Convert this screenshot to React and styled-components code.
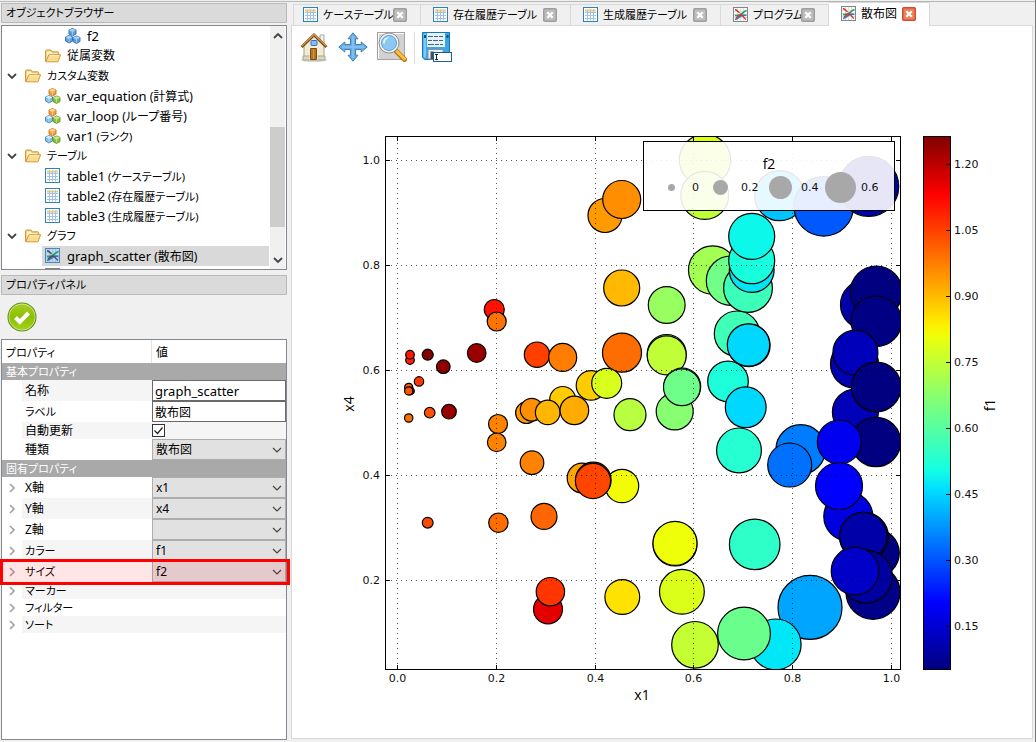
import React, { useState } from "react";
import styled, { createGlobalStyle, css } from "styled-components";

const GlobalStyle = createGlobalStyle`
  * { box-sizing: border-box; }
  body {
    margin: 0;
    background: #f0f0f0;
    color: #000;
    font-family: "Noto Sans", "Noto Sans CJK JP", sans-serif;
    font-size: 12px;
    font-feature-settings: "palt";
  }
  button, input, select { font: inherit; font-feature-settings: inherit; color: inherit; }
`;

/* ---------- frame ---------- */

const Window = styled.div`
  min-height: 100vh;
  padding-top: 1px;
  display: flex;
  border-right: 1px solid #777;
`;

const Frame = styled.div`
  flex: 1;
  min-width: 0;
  display: grid;
  grid-template-columns: 288px minmax(0, 1fr);
  border-top: 1px solid #b4b8b4;
`;

const Sidebar = styled.aside`
  display: flex;
  flex-direction: column;
  padding: 1px 1px 2px;
`;

const PanelTitle = styled.h2`
  margin: 0;
  height: 20px;
  padding: 0 4px;
  border: 1px solid #b8b8b8;
  background: #dadada;
  font-size: 11px;
  font-weight: 400;
  line-height: 18px;
`;

/* ---------- object tree ---------- */

const TreeBox = styled.div`
  display: flex;
  height: 245px;
  margin: 2px 0 5px;
  border: 1px solid #828790;
  background: #fff;
  overflow: hidden;
`;

const TreeList = styled.ul`
  flex: 1;
  min-width: 0;
  margin: 0;
  padding: 0 1px 0 0;
  list-style: none;
`;

const TreeRow = styled.li`
  display: flex;
  align-items: center;
  height: 20px;
  padding-left: ${(p) => p.$level * 20}px;
  white-space: nowrap;
`;

const TreeToggle = styled.span`
  display: flex;
  justify-content: center;
  width: 20px;
`;

const TreeItem = styled.span`
  flex: 1;
  display: flex;
  align-items: center;
  gap: 6px;
  height: 20px;
  padding-left: 3px;
  background: ${(p) => (p.$selected ? "#d9d9d9" : "transparent")};
`;

const TreeLabel = styled.span`
  line-height: 20px;
  font-size: ${(p) => (p.$small ? 11 : 12)}px;
`;

const LatinName = styled.span`
  font-size: 13px;
`;

const ScrollBar = styled.div`
  display: flex;
  flex-direction: column;
  align-items: center;
  justify-content: space-between;
  width: 15px;
  margin-right: 1px;
  padding: 5px 0 4px;
  background: #f0f0f0;
`;

const ScrollThumb = styled.div`
  width: 15px;
  height: 100px;
  margin-top: 58px;
  background: #cdcdcd;
`;

/* ---------- property panel ---------- */

const ApplyBar = styled.div`
  height: 44px;
  padding: 7px 6px;
`;

const IconButton = styled.button`
  display: block;
  width: 30px;
  height: 30px;
  padding: 0;
  border: 0;
  background: none;
`;

const PropertyBox = styled.div`
  flex: 1;
  border: 1px solid #828790;
  background: #fff;
`;

const PropertyTable = styled.table`
  width: 100%;
  table-layout: fixed;
  border-spacing: 0;
  td, th { padding: 0; font-weight: 400; text-align: left; }
`;

const HeadCell = styled.th`
  height: 23px;
  font-size: ${(p) => (p.$divided ? 11 : 12)}px;
  && { padding-left: 4px; }
  border-right: ${(p) => (p.$divided ? "1px solid #e2e2e2" : "0")};
`;

const SectionCell = styled.th`
  height: 17px;
  font-size: 11px;
  line-height: 17px;
  background: #a9a9a9;
  color: #fff;
  && { padding-left: 4px; }
`;

const PropertyRow = styled.tr`
  position: relative;
  height: ${(p) => (p.$tall ? 21 : 17)}px;
  line-height: 16px;
`;

const shade = css`
  background: ${(p) => (p.$shaded ? "#f5f5f5" : "#fff")};
`;

const ExpandCell = styled.td`
  svg { display: block; margin: 0 auto; }
`;

const LabelCell = styled.th`
  ${shade}
  font-size: ${(p) => (p.$small ? 11 : 12)}px;
  && { padding-left: 3px; }
`;

const ValueCell = styled.td`
  ${shade}
`;

const TextInput = styled.input`
  display: block;
  width: 100%;
  height: 21px;
  padding: 0 2px;
  border: 1px solid #6a6a6a;
  background: #fff;
  font-size: ${(p) => (p.$latin ? 13 : 12)}px;
`;

const CheckWrap = styled.span`
  display: grid;
  width: 13px;
  height: 13px;
  > * { grid-area: 1 / 1; }
  svg { pointer-events: none; }
`;

const CheckBox = styled.input`
  appearance: none;
  width: 13px;
  height: 13px;
  margin: 0;
  border: 1px solid #333;
  background: #fff;
  &:not(:checked) + svg { display: none; }
`;

const SelectWrap = styled.span`
  display: grid;
  align-items: center;
  > * { grid-area: 1 / 1; }
  svg { justify-self: end; margin-right: 4px; pointer-events: none; }
`;

const Select = styled.select`
  appearance: none;
  width: 100%;
  height: 21px;
  padding: 0 20px 0 3px;
  border: 1px solid #adadad;
  border-radius: 0;
  background: #e1e1e1;
`;

const Highlight = styled.span`
  position: absolute;
  z-index: 2;
  inset: -2px -4px -3px -2px;
  border: 3px solid #f00;
  background: rgba(255, 0, 0, 0.1);
  pointer-events: none;
`;

/* ---------- document area ---------- */

const Main = styled.main`
  display: flex;
  flex-direction: column;
  min-width: 0;
  padding: 0 2px 3px 3px;
`;

const TabStrip = styled.div`
  display: flex;
  align-items: flex-end;
  height: 23px;
  padding-left: 2px;
`;

const Tab = styled.div`
  position: relative;
  display: flex;
  align-items: center;
  gap: 4px;
  width: ${(p) => p.$width}px;
  height: ${(p) => (p.$active ? 24 : 21)}px;
  margin-bottom: ${(p) => (p.$active ? -1 : 0)}px;
  padding: 0 13px ${(p) => (p.$active ? 1 : 0)}px 12px;
  border: solid #d9d9d9;
  border-width: 1px 1px 0 0;
  background: ${(p) => (p.$active ? "#fff" : "#f0f0f0")};
  &:first-child { border-left-width: 1px; padding-left: 9px; }
`;

const TabButton = styled.button`
  flex: 1;
  display: flex;
  align-items: center;
  gap: 4px;
  min-width: 0;
  padding: 0;
  border: 0;
  background: none;
  font-size: ${(p) => (p.$large ? 12 : 11)}px;
  line-height: 18px;
  white-space: nowrap;
  svg { flex: none; }
`;

const CloseButton = styled.button`
  flex: none;
  width: 14px;
  height: 14px;
  padding: 0;
  border: 0;
  background: none;
  svg { display: block; }
`;

const Page = styled.section`
  flex: 1;
  border: 1px solid #d9d9d9;
  background: #fff;
`;

const Toolbar = styled.div`
  display: flex;
  gap: 7px;
  height: 44px;
  padding: 6px 7px;
`;

const ToolGroup = styled.div`
  display: flex;
  gap: 9px;
`;

const Separator = styled.div`
  width: 1px;
  background: #dcdcdc;
`;

const Chart = styled.svg`
  display: block;
  width: 100%;
  height: auto;
`;

const TickText = styled.text`
  font: 11px "DejaVu Sans", sans-serif;
  fill: #111;
`;

const AxisText = styled.text`
  font: 14px "Open Sans", sans-serif;
  text-anchor: middle;
  fill: #000;
`;

/* ---------- icons ---------- */

function Cube({ x, y, light, mid, dark }) {
  return (
    <g transform={`translate(${x} ${y})`} strokeLinejoin="round">
      <path d="M4 .5 7.5 2v4L4 8 .5 6V2z" fill={mid} stroke={dark} strokeWidth=".9" />
      <path d="M4 .8 7.2 2.1 4 3.6.8 2.1z" fill={light} />
      <path d="M4 3.6V7.6M.9 2.2 4 3.7l3.1-1.5" fill="none" stroke="#fff" strokeOpacity=".6" strokeWidth=".6" />
    </g>
  );
}

const BLUE = { light: "#a6d3f7", mid: "#5a9fe0", dark: "#2a6cb8" };
const PALE = { light: "#d4ecfb", mid: "#86bfe8", dark: "#4187bf" };
const GREEN = { light: "#cbe88c", mid: "#8cc23c", dark: "#5b9418" };
const ORANGE = { light: "#ffd79a", mid: "#f5a03c", dark: "#cf7312" };

function CubesIcon({ mixed }) {
  return (
    <svg width="16" height="16" viewBox="0 0 16 16" aria-hidden="true">
      <Cube x={3.5} y={0} {...(mixed ? ORANGE : BLUE)} />
      <Cube x={0} y={7} {...(mixed ? PALE : BLUE)} />
      <Cube x={7.5} y={7.5} {...(mixed ? GREEN : BLUE)} />
    </svg>
  );
}

function FolderIcon() {
  return (
    <svg width="16" height="16" viewBox="0 0 16 16" aria-hidden="true">
      <path d="M.5 13.500V2.800L1.500 2h4.500l1.300 1.800H13l.7.8v2" fill="#f3cf7a" stroke="#cc9a3c" />
      <path d="M2 3.500h3.700l1.200 1.800h5.400v2H4L1.700 11z" fill="#fdf3d0" />
      <path d="M.8 13.800 3.800 6.700h11.800L13 13.800z" fill="#fbdc8c" stroke="#cc9a3c" strokeLinejoin="round" />
      <path d="M4.700 7.700h9.400" stroke="#fff3c8" />
    </svg>
  );
}

function TableIcon() {
  return (
    <svg width="16" height="16" viewBox="0 0 16 16" aria-hidden="true">
      <rect x=".5" y=".5" width="14" height="14" fill="#fff" stroke="#2a84b4" />
      <path d="M2 3.500h11" stroke="#f7cf6a" strokeWidth="2" />
      <path d="M2 5.500h11M2 8.500h11M2 11.500h11" stroke="#a4c0e4" />
      <path d="M4.500 2.500v11M7.500 2.500v11M10.500 2.500v11" stroke="#a4c0e4" />
    </svg>
  );
}

function GraphIcon({ selected }) {
  return (
    <svg width="16" height="16" viewBox="0 0 16 16" aria-hidden="true">
      <rect x=".5" y=".5" width="14" height="14" fill={selected ? "#b9d8f2" : "#fdfdfd"} stroke={selected ? "#4f86b8" : "#858585"} />
      <path d="M4.500 1v13M7.500 1v13M10.500 1v13M1 4.500h13M1 7.500h13M1 10.500h13" stroke={selected ? "#a2c6e6" : "#dedede"} />
      <path d="M2 12.500c3-.5 4-2.500 6-3.500s3.500-1 5.500-.5" fill="none" stroke="#2e7fc8" strokeWidth="1.700" />
      <path d="M2 8.500c3 .3 5-.3 7-2s2.500-2.500 4.500-3" fill="none" stroke="#2f9e54" strokeWidth="1.700" />
      <path d="M2 2.500c2 .5 3 1.800 4.500 3.500M3 11c2.500-2 4-3.500 5.500-3s2.500 3 4.500 4.500" fill="none" stroke={selected ? "#5a4660" : "#d8322a"} strokeWidth="1.400" />
    </svg>
  );
}

function CloseIcon({ active }) {
  return (
    <svg width="14" height="14" viewBox="0 0 14 14" aria-hidden="true">
      <rect x=".75" y=".75" width="12.500" height="12.500" rx="1" fill={active ? "#e8825c" : "#bdbdbd"} stroke={active ? "#d84a2c" : "#9e9e9e"} strokeWidth="1.500" />
      <path d="m4.300 4.300 5.400 5.400m0-5.400L4.300 9.700" stroke="#fff" strokeWidth="2.200" />
    </svg>
  );
}

function Chevron({ direction, color = "#444", weight = 1.2 }) {
  const shapes = {
    down: "m1 3 4 4 4-4",
    up: "m1 7 4-4 4 4",
    right: "m3 1 4 4-4 4",
  };
  return (
    <svg width="10" height="10" viewBox="0 0 10 10" aria-hidden="true">
      <path d={shapes[direction]} fill="none" stroke={color} strokeWidth={weight} />
    </svg>
  );
}

function ApplyIcon() {
  return (
    <svg width="30" height="30" viewBox="0 0 30 30" aria-hidden="true">
      <defs>
        <linearGradient id="apply" x1="0" y1="0" x2="0" y2="1">
          <stop offset="0" stopColor="#a6cf1e" />
          <stop offset=".5" stopColor="#8cc004" />
          <stop offset="1" stopColor="#a4d018" />
        </linearGradient>
      </defs>
      <circle cx="15" cy="15" r="14.500" fill="#5f8f10" />
      <circle cx="15" cy="15" r="13.400" fill="#d4ea98" />
      <circle cx="15" cy="15" r="12.600" fill="url(#apply)" />
      <path d="m8.500 15.500 4.300 4.300 8.700-8.800" fill="none" stroke="#fff" strokeWidth="4" />
    </svg>
  );
}

function HomeIcon() {
  return (
    <svg width="30" height="30" viewBox="0 0 30 30" aria-hidden="true">
      <ellipse cx="15" cy="28" rx="13" ry="2" fill="#d6d6d0" />
      <path d="M21 3h4v9h-4z" fill="#f2f2ee" stroke="#a8a8a0" />
      <path d="M5 13 15 4l10 9v14H5z" fill="#f0ebd2" stroke="#a79f80" />
      <path d="M4 24h22v4H4z" fill="#d9d6c4" stroke="#a8a48e" />
      <path d="M2.500 15 15 3l12.500 12" fill="none" stroke="#7c4b18" strokeWidth="3" />
      <path d="M2.500 14.300 15 2.500l12.500 11.800" fill="none" stroke="#d79a50" strokeWidth="1.200" />
      <rect x="12" y="8.500" width="6" height="5" rx="1" fill="#8dbcf0" stroke="#2f6fc4" />
      <path d="M10.500 28V15.500h8V28z" fill="#f8f3dc" />
      <path d="M11.500 27.500v-11h6v11z" fill="#b8741c" stroke="#7c4b14" />
      <path d="M14.500 17v10" stroke="#d99a40" />
    </svg>
  );
}

function MoveIcon() {
  return (
    <svg width="30" height="30" viewBox="0 0 30 30" aria-hidden="true">
      <path
        d="m15 .8 5 6h-2.500v5.700h5.700V10l6 5-6 5v-2.500h-5.700v5.700H20l-5 6-5-6h2.500v-5.700H6.800V20l-6-5 6-5v2.500h5.700V6.800H10z"
        fill="#6aaee6" stroke="#3f80bc" strokeLinejoin="round"
      />
      <path d="M15 4v22M4 15h22" stroke="#8cc2ee" strokeWidth="1.600" />
    </svg>
  );
}

function ZoomIcon() {
  return (
    <svg width="30" height="30" viewBox="0 0 30 30" aria-hidden="true">
      <rect x="2" y="2" width="25" height="25" fill="#d2d2d2" />
      <rect x=".5" y=".5" width="27" height="27" fill="none" stroke="#444" strokeDasharray="1 1" />
      <path d="m19.500 19.500 8 8" stroke="#b87810" strokeWidth="5" strokeLinecap="round" />
      <path d="m20 19.500 7.500 7.500" stroke="#fcc040" strokeWidth="3" strokeLinecap="round" />
      <circle cx="12" cy="11" r="8.800" fill="#8cc8f4" stroke="#f4f4f4" strokeWidth="2.400" />
      <circle cx="12" cy="11" r="10" fill="none" stroke="#777" strokeWidth=".8" />
      <circle cx="12" cy="11" r="7.600" fill="none" stroke="#4a90cc" strokeWidth=".8" />
      <path d="M6 11c0-4 3-6 7-6-3 1-5 3-5.500 7z" fill="#e4f5ff" />
    </svg>
  );
}

function SaveIcon() {
  return (
    <svg width="30" height="31" viewBox="0 0 30 31" aria-hidden="true">
      <path d="M.5.500h27v27H3l-2.500-2z" fill="#3ba6e4" stroke="#1673b4" />
      <path d="M1.500 1.500h2.500v24H1.500z" fill="#7ccaf5" />
      <path d="M5 1h18v14H5z" fill="#e3f1fa" />
      <path d="M6 4.500h5m1 0h4m1 0h4M6 8.500h4m1 0h5m1 0h4M6 12.500h6m1 0h4m1 0h3" stroke="#4d6070" />
      <path d="M2 3h2v3H2zM24.500 3h2v3h-2z" fill="#0b4f88" />
      <path d="M6 17.500h15V27H6z" fill="#e8eef2" stroke="#8595a4" />
      <path d="M8.500 19.500h3V27h-3z" fill="#46525e" />
      <rect x="11.500" y="20.500" width="18" height="9" fill="#fff" stroke="#1c5f96" />
      <path d="M13 22.500h3m-3 5h3M14.500 22.500v5" stroke="#222" />
    </svg>
  );
}

/* ---------- data ---------- */

const tree = [
  { level: 2, icon: "cubes", name: "f2" },
  { level: 1, icon: "folder", label: "従属変数" },
  { level: 0, icon: "folder", label: "カスタム変数", open: true, small: true },
  { level: 1, icon: "mixed", name: "var_equation", label: " (計算式)" },
  { level: 1, icon: "mixed", name: "var_loop", label: " (ループ番号)" },
  { level: 1, icon: "mixed", name: "var1", label: " (ランク)", small: true },
  { level: 0, icon: "folder", label: "テーブル", open: true, small: true },
  { level: 1, icon: "table", name: "table1", label: " (ケーステーブル)", small: true },
  { level: 1, icon: "table", name: "table2", label: " (存在履歴テーブル)", small: true },
  { level: 1, icon: "table", name: "table3", label: " (生成履歴テーブル)", small: true },
  { level: 0, icon: "folder", label: "グラフ", open: true, small: true },
  { level: 1, icon: "graph", name: "graph_scatter", label: " (散布図)", selected: true },
  { level: 1, icon: "graph" },
];

const treeIcons = {
  cubes: () => <CubesIcon />,
  mixed: () => <CubesIcon mixed />,
  folder: () => <FolderIcon />,
  table: () => <TableIcon />,
  graph: (selected) => <GraphIcon selected={selected} />,
};

const sections = [
  {
    title: "基本プロパティ",
    rows: [
      { id: "name", label: "名称", kind: "text", value: "graph_scatter", shaded: true, latin: true },
      { id: "label", label: "ラベル", kind: "text", value: "散布図", small: true },
      { id: "auto", label: "自動更新", kind: "check", shaded: true },
      { id: "kind", label: "種類", kind: "select", value: "散布図" },
    ],
  },
  {
    title: "固有プロパティ",
    rows: [
      { id: "xaxis", label: "X軸", kind: "select", value: "x1", expandable: true },
      { id: "yaxis", label: "Y軸", kind: "select", value: "x4", expandable: true, shaded: true },
      { id: "zaxis", label: "Z軸", kind: "select", value: "", expandable: true },
      { id: "color", label: "カラー", kind: "select", value: "f1", expandable: true, shaded: true, small: true },
      { id: "size", label: "サイズ", kind: "select", value: "f2", expandable: true, highlighted: true, small: true },
      { id: "marker", label: "マーカー", expandable: true, shaded: true, small: true },
      { id: "filter", label: "フィルター", expandable: true, small: true },
      { id: "sort", label: "ソート", expandable: true, shaded: true, small: true },
    ],
  },
];

const tabs = [
  { label: "ケーステーブル", icon: "table", width: 128 },
  { label: "存在履歴テーブル", icon: "table", width: 150 },
  { label: "生成履歴テーブル", icon: "table", width: 150 },
  { label: "プログラム", icon: "graph", width: 108 },
  { label: "散布図", icon: "graph", width: 101, active: true },
];

/* cx, cy, r, fill; later points lie over earlier ones */
const points = [
  [605, 215.5, 17, "#ff9b00"], [621.7, 199.5, 19, "#ff8e00"], [621.7, 288, 18, "#ffb900"],
  [622, 352.7, 19.5, "#ff6c00"], [494.3, 309.5, 10, "#ff1300"], [496.7, 321.5, 9.5, "#ff7300"],
  [410, 360, 4.3, "#ff2000"], [410, 354.7, 4.3, "#ff1500"], [427.7, 354.7, 5.5, "#800000"],
  [443.3, 366.7, 6.8, "#900000"], [476.7, 353, 9.3, "#9b0000"], [537, 354.7, 12.7, "#ff3f00"],
  [562.7, 357.4, 14, "#ff7d00"], [419, 381.4, 4.7, "#ff3500"], [408.7, 387.4, 4.1, "#ff5a00"],
  [410.5, 391, 3.8, "#801800"], [408.7, 391, 4.1, "#ff5500"], [562.7, 399.5, 13, "#ffcc00"],
  [591, 385.4, 14.8, "#ffcc00"], [606.7, 383.3, 15, "#d9ff1d"], [408.7, 418, 4.2, "#ff6f00"],
  [429.7, 412.7, 5.3, "#ff5000"], [449, 411.7, 7.3, "#9b0000"], [526.4, 412.7, 10.8, "#ff9b00"],
  [531.7, 409.7, 11.4, "#ff8e00"], [547.7, 412.4, 12.3, "#ffb600"], [574.4, 410.4, 14.3, "#ffab00"],
  [498, 424, 9.5, "#ff8300"], [496.7, 442.3, 9.3, "#ff8300"], [532, 462.7, 11.8, "#ff8300"],
  [582, 478, 14.8, "#ffa400"], [622, 486, 16.7, "#f1fc06"], [593.3, 480, 17.8, "#ff4600"],
  [593, 481, 17.6, "#ff4600"], [427.7, 522.7, 5.4, "#ff4800"], [498.4, 522.7, 9.7, "#ff6c00"],
  [544, 516.4, 13, "#ff6500"], [548, 609.3, 14.5, "#e40000"], [550.4, 591.7, 14.2, "#ff3500"],
  [622.3, 597, 17.4, "#ffe200"], [630, 414.7, 16, "#b7ff40"],
  [705, 160, 25.7, "#d9ff0d"], [704.7, 195.4, 24, "#c0ff37"], [779.7, 195.7, 25, "#00c4ff"],
  [823.7, 206.4, 29.7, "#0058ff"], [868.7, 186.4, 30, "#0000a8"],
  [712.7, 270, 24.2, "#a4ff53"], [731, 280.7, 24.7, "#70ff87"], [748, 288, 24.4, "#3cffba"],
  [751.7, 270, 22.4, "#00e4f8"], [751.7, 260.7, 23, "#18ffde"], [751.7, 236.4, 23, "#0cf8ea"],
  [666.7, 305, 18.4, "#97ff60"], [666.7, 354, 19.5, "#c0ff37"], [666.7, 355.4, 19.5, "#c0ff37"],
  [674.7, 411.4, 18.5, "#87ff70"], [682.3, 386.4, 18.4, "#6dff8a"], [681.9, 387.2, 18.4, "#6dff8a"],
  [737, 333.7, 22.7, "#40ffb7"], [728, 381.4, 20.3, "#1dffda"], [748.9, 345.4, 21.2, "#00d8ff"],
  [748.5, 345, 21.2, "#00d8ff"], [745.7, 407.3, 20.4, "#00d8ff"],
  [865, 304.7, 24.5, "#0000a8"], [876.3, 292, 26, "#000080"], [876.3, 321.3, 25.3, "#000084"],
  [854.5, 364, 24, "#0000b4"], [855.4, 352.7, 22.5, "#0000ba"], [855.4, 412, 23, "#0000b8"],
  [876.3, 387, 24.8, "#000080"], [876, 442, 24.7, "#000080"],
  [800.7, 449.5, 24.8, "#007cff"], [789.7, 465, 22, "#0070ff"], [839.3, 442, 22, "#0000f0"],
  [848.3, 516.4, 24.5, "#0000e0"], [839, 486, 23.5, "#0000ff"], [875.3, 553, 24, "#000084"],
  [864, 536.8, 24.4, "#0000a0"], [863.3, 536, 23.6, "#0000a8"], [873, 592.3, 27, "#000088"],
  [866, 576.6, 26.4, "#0000a0"], [855, 571, 23.8, "#0000c8"],
  [739, 450.4, 22.4, "#26ffd1"], [754.7, 544.4, 25.3, "#2effc8"], [810, 607.4, 32, "#00a5ff"],
  [775.7, 644.4, 25.4, "#00e8f8"], [744, 633.5, 26.4, "#6aff8d"], [675, 544, 22, "#eeff09"],
  [675, 543.3, 22, "#eeff09"], [681.9, 591.8, 22.4, "#dcff1a"], [695, 644.8, 23.3, "#c4ff33"],
];

const xTicks = [[397.5, "0.0"], [496.5, "0.2"], [595.5, "0.4"], [693.5, "0.6"], [792.5, "0.8"], [891.5, "1.0"]];
const yTicks = [[160.5, "1.0"], [265.5, "0.8"], [370.5, "0.6"], [475.5, "0.4"], [580.5, "0.2"]];
const barTicks = [
  [164.5, "1.20"], [230.5, "1.05"], [296.5, "0.90"], [362.5, "0.75"],
  [428.5, "0.60"], [494.5, "0.45"], [560.5, "0.30"], [626.5, "0.15"],
];
const legendItems = [[671.5, 4, 692, "0"], [720.5, 8, 741, "0.2"], [780.5, 12, 801, "0.4"], [840.5, 16, 861, "0.6"]];
const jet = [
  [0, "#800000"], [0.11, "#ff0000"], [0.35, "#ffec00"], [0.375, "#eeff09"],
  [0.5, "#7dff7a"], [0.625, "#15ffe2"], [0.66, "#00e0ff"], [0.875, "#0000ff"], [1, "#000080"],
];

function ScatterChart() {
  return (
    <Chart viewBox="292 70 740 668" role="img" aria-label="散布図">
      <defs>
        <clipPath id="plot"><rect x="386" y="137" width="514" height="532" /></clipPath>
        <linearGradient id="jet" x1="0" y1="0" x2="0" y2="1">
          {jet.map(([o, c]) => <stop key={o} offset={o} stopColor={c} />)}
        </linearGradient>
      </defs>

      <g clipPath="url(#plot)" stroke="#000" strokeWidth="1.2">
        {points.map(([x, y, r, fill], i) => <circle key={i} cx={x} cy={y} r={r} fill={fill} />)}
      </g>

      {xTicks.map(([x, text]) => (
        <g key={text}>
          <path d={`M${x} 669V137`} stroke="#000" strokeOpacity=".65" strokeDasharray="1 4" />
          <path d={`M${x} 669v-4M${x} 137v4`} stroke="#000" />
          <TickText x={x} y="682" textAnchor="middle">{text}</TickText>
        </g>
      ))}
      {yTicks.map(([y, text]) => (
        <g key={text}>
          <path d={`M386 ${y}H900`} stroke="#000" strokeOpacity=".65" strokeDasharray="1 4" />
          <path d={`M386 ${y}h4M900 ${y}h-4`} stroke="#000" />
          <TickText x="380" y={y + 3} textAnchor="end">{text}</TickText>
        </g>
      ))}
      <rect x="385.5" y="136.5" width="515" height="533" fill="none" stroke="#000" />
      <AxisText x="642" y="700">x1</AxisText>
      <AxisText transform="translate(354 404) rotate(-90)">x4</AxisText>

      <rect x="643.5" y="141.5" width="251" height="69" fill="#fff" fillOpacity=".9" stroke="#000" />
      <AxisText x="769" y="169">f2</AxisText>
      {legendItems.map(([x, r, tx, text]) => (
        <g key={text}>
          <circle cx={x} cy="187.500" r={r - 0.5} fill="#a8a8a8" />
          <TickText x={tx} y="191">{text}</TickText>
        </g>
      ))}

      <rect x="923.5" y="136.5" width="27" height="533" fill="url(#jet)" stroke="#000" />
      {barTicks.map(([y, text]) => (
        <g key={text}>
          <path d={`M950 ${y}h-4`} stroke="#000" />
          <TickText x="954" y={y + 3}>{text}</TickText>
        </g>
      ))}
      <AxisText transform="translate(995 405) rotate(-90)">f1</AxisText>
    </Chart>
  );
}

function PropertyValue({ row }) {
  const [value, setValue] = useState(row.value ?? "");
  const [checked, setChecked] = useState(true);
  if (row.kind === "text") {
    return <TextInput id={row.id} type="text" $latin={row.latin} value={value} onChange={(e) => setValue(e.target.value)} />;
  }
  if (row.kind === "check") {
    return (
      <CheckWrap>
        <CheckBox id={row.id} type="checkbox" checked={checked} onChange={(e) => setChecked(e.target.checked)} />
        <svg width="13" height="13" viewBox="0 0 13 13" aria-hidden="true">
          <path d="m2.500 6.500 3 3 5-6" fill="none" stroke="#222" strokeWidth="1.200" />
        </svg>
      </CheckWrap>
    );
  }
  if (row.kind === "select") {
    return (
      <SelectWrap>
        <Select id={row.id} value={value} onChange={(e) => setValue(e.target.value)}>
          <option value={row.value}>{row.value}</option>
        </Select>
        <Chevron direction="down" />
      </SelectWrap>
    );
  }
  return null;
}

function Properties() {
  return (
    <PropertyTable>
      <colgroup>
        <col style={{ width: 20 }} />
        <col style={{ width: 130 }} />
        <col />
      </colgroup>
      <thead>
        <tr>
          <HeadCell colSpan={2} $divided>プロパティ</HeadCell>
          <HeadCell>値</HeadCell>
        </tr>
      </thead>
      {sections.map((section) => (
        <tbody key={section.title}>
          <tr><SectionCell colSpan={3}>{section.title}</SectionCell></tr>
          {section.rows.map((row) => (
            <PropertyRow key={row.id} $tall={row.kind === "text" || row.kind === "select"}>
              <ExpandCell>
                {row.expandable && <Chevron direction="right" color="#a0a0a0" weight={1.6} />}
                {row.highlighted && <Highlight />}
              </ExpandCell>
              <LabelCell scope="row" $shaded={row.shaded} $small={row.small}>
                {row.kind ? <label htmlFor={row.id}>{row.label}</label> : row.label}
              </LabelCell>
              <ValueCell $shaded={row.shaded}><PropertyValue row={row} /></ValueCell>
            </PropertyRow>
          ))}
        </tbody>
      ))}
    </PropertyTable>
  );
}

export default function App() {
  return (
    <Window>
      <GlobalStyle />
      <Frame>
        <Sidebar>
          <PanelTitle>オブジェクトブラウザー</PanelTitle>
          <TreeBox>
            <TreeList>
              {tree.map((node, i) => (
                <TreeRow key={i} $level={node.level}>
                  <TreeToggle>{node.open && <Chevron direction="down" weight={1.8} />}</TreeToggle>
                  <TreeItem $selected={node.selected}>
                    {treeIcons[node.icon](node.selected)}
                    <TreeLabel $small={node.small}>
                      {node.name && <LatinName>{node.name}</LatinName>}
                      {node.label}
                    </TreeLabel>
                  </TreeItem>
                </TreeRow>
              ))}
            </TreeList>
            <ScrollBar>
              <Chevron direction="up" weight={1.8} />
              <ScrollThumb />
              <Chevron direction="down" weight={1.8} />
            </ScrollBar>
          </TreeBox>
          <PanelTitle>プロパティパネル</PanelTitle>
          <ApplyBar>
            <IconButton type="button" aria-label="適用"><ApplyIcon /></IconButton>
          </ApplyBar>
          <PropertyBox><Properties /></PropertyBox>
        </Sidebar>

        <Main>
          <TabStrip>
            {tabs.map((tab) => (
              <Tab key={tab.label} $width={tab.width} $active={tab.active}>
                <TabButton type="button" $large={tab.active}>
                  {treeIcons[tab.icon]()}
                  {tab.label}
                </TabButton>
                <CloseButton type="button" aria-label="閉じる"><CloseIcon active={tab.active} /></CloseButton>
              </Tab>
            ))}
          </TabStrip>
          <Page>
            <Toolbar>
              <ToolGroup>
                <IconButton type="button" aria-label="ホーム"><HomeIcon /></IconButton>
                <IconButton type="button" aria-label="移動"><MoveIcon /></IconButton>
                <IconButton type="button" aria-label="拡大"><ZoomIcon /></IconButton>
              </ToolGroup>
              <Separator />
              <IconButton type="button" aria-label="保存"><SaveIcon /></IconButton>
            </Toolbar>
            <ScatterChart />
          </Page>
        </Main>
      </Frame>
    </Window>
  );
}
